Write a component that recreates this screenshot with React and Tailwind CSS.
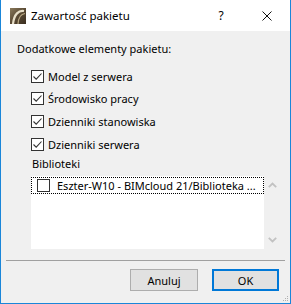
import React from 'react';

const font = { fontFamily: '"Noto Sans", "Open Sans", sans-serif' };

const Check = ({ checked }) => (
  <span className="w-[13px] h-[13px] border border-[#333333] bg-white flex items-center justify-center shrink-0">
    {checked && (
      <svg width="11" height="11" viewBox="0 0 11 11">
        <path d="M1.5 5.5 L4.2 8.2 L9.5 2.5" fill="none" stroke="#333333" strokeWidth="1.1" />
      </svg>
    )}
  </span>
);

const AppIcon = () => (
  <svg width="16" height="16" viewBox="0 0 16 16">
    <defs>
      <linearGradient id="ic" x1="0" y1="0" x2="1" y2="1">
        <stop offset="0" stopColor="#8a7a5c" />
        <stop offset="0.5" stopColor="#5a4a34" />
        <stop offset="1" stopColor="#3a2e20" />
      </linearGradient>
    </defs>
    <rect width="16" height="16" fill="url(#ic)" />
    <path d="M3 16 C4 6 9 2 14 3" fill="none" stroke="#e8dfc8" strokeWidth="2.2" />
    <path d="M8 16 C8.5 9 11 6 15 5.5" fill="none" stroke="#b9a883" strokeWidth="1.2" />
  </svg>
);

const Arrow = ({ up }) => (
  <svg width="9" height="6" viewBox="0 0 9 6">
    <path d={up ? 'M0.8 5.2 L4.5 1.5 L8.2 5.2' : 'M0.8 0.8 L4.5 4.5 L8.2 0.8'} fill="none" stroke="#c2c2c2" strokeWidth="1.8" />
  </svg>
);

const items = [
  { label: 'Model z serwera', cls: '' },
  { label: 'Środowisko pracy', cls: 'mt-[9px]' },
  { label: 'Dzienniki stanowiska', cls: 'mt-[10px]' },
  { label: 'Dzienniki serwera', cls: 'mt-[10px]' },
];

export default function App() {
  return (
    <div style={font} className="w-[291px] h-[304px] flex flex-col bg-[#f0f0f0] border-l border-r border-b border-[#1a86d9] text-[11px] text-black overflow-hidden">
      {/* title bar */}
      <div className="h-[31px] bg-white flex items-center shrink-0">
        <div className="ml-[9px] flex items-center"><AppIcon /></div>
        <span className="ml-[5px] text-[11.5px] leading-none">Zawartość pakietu</span>
        <div className="ml-auto flex h-full">
          <div className="w-[46px] flex items-center justify-center text-[12px]">?</div>
          <div className="w-[46px] flex items-center justify-center">
            <svg width="10" height="10" viewBox="0 0 10 10">
              <path d="M0.5 0.5 L9.5 9.5 M9.5 0.5 L0.5 9.5" stroke="#111" strokeWidth="1" />
            </svg>
          </div>
        </div>
      </div>

      {/* body */}
      <div className="flex flex-col pl-[16px] pt-[10px]">
        <div className="leading-[15px]">Dodatkowe elementy pakietu:</div>
        <div className="flex flex-col mt-[14px] ml-[14px]">
          {items.map((it) => (
            <div key={it.label} className={`flex items-center gap-[4px] h-[13px] ${it.cls}`}>
              <Check checked />
              <span className="leading-none">{it.label}</span>
            </div>
          ))}
        </div>
        <div className="mt-[5px] ml-[15px] leading-[15px]">Biblioteki</div>
        <div className="mt-[5px] ml-[14px] w-[250px] h-[73px] flex">
          <div className="flex-1 bg-white pt-[1px]">
            <div className="h-[17px] border border-dotted border-black flex items-center pl-[5px] gap-[7px]">
              <Check />
              <span className="leading-none whitespace-nowrap">Eszter-W10 - BIMcloud 21/Biblioteka ...</span>
            </div>
          </div>
          <div className="w-[17px] flex flex-col items-center justify-between py-[6px]">
            <Arrow up />
            <Arrow />
          </div>
        </div>
      </div>

      <div className="mt-[11px] mx-[5px] h-px bg-[#a0a0a0]" />

      <div className="flex justify-end gap-[14px] mt-[8px] mr-[11px]">
        <button className="w-[68px] h-[22px] bg-[#e1e1e1] border border-[#adadad] leading-none">Anuluj</button>
        <button className="w-[67px] h-[22px] bg-[#e1e1e1] border-2 border-[#0078d7] leading-none">OK</button>
      </div>

      <div className="mt-auto self-end mr-[2px] mb-[2px] grid grid-cols-3 gap-px w-[5px]">
        <span />
        <span />
        <span className="w-px h-px bg-[#b0b0b0]" />
        <span />
        <span className="w-px h-px bg-[#b0b0b0]" />
        <span className="w-px h-px bg-[#b0b0b0]" />
        <span className="w-px h-px bg-[#b0b0b0]" />
        <span className="w-px h-px bg-[#b0b0b0]" />
        <span className="w-px h-px bg-[#b0b0b0]" />
      </div>
    </div>
  );
}
